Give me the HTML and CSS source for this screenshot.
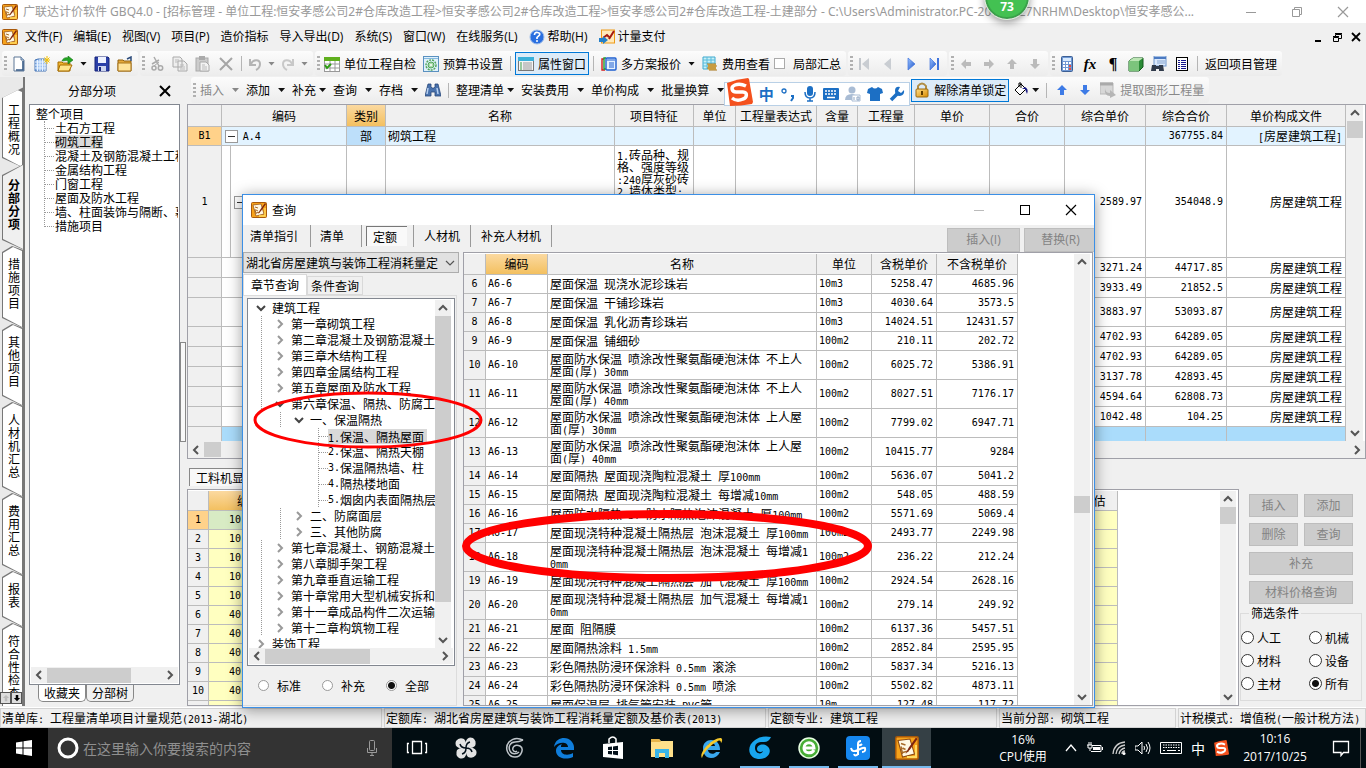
FILE: index.html
```html
<!DOCTYPE html>
<html lang="zh-CN">
<head>
<meta charset="utf-8">
<title>广联达计价软件 GBQ4.0</title>
<link rel="stylesheet" href="styles.css">
</head>
<body>
<svg class="defs" aria-hidden="true">
  <defs>
    <linearGradient id="gBlue" x1="0" y1="0" x2="1" y2="1"><stop offset="0" stop-color="#9cc4ff"/><stop offset="1" stop-color="#1c53c8"/></linearGradient>
    <linearGradient id="gGold" x1="0" y1="0" x2="1" y2="1"><stop offset="0" stop-color="#ffe08a"/><stop offset="1" stop-color="#d98a00"/></linearGradient>
  </defs>
  <symbol id="app" viewBox="0 0 16 16"><rect x=".5" y=".5" width="15" height="15" rx="1" fill="#f6a21b" stroke="#a8590b"/><path d="M2 3l8-1 3 10-8 2z" fill="#fff8e4" stroke="#8e4a10" stroke-width=".7"/><path d="M4 5l3 1M5 8l2 1M5 11l4-1M4 7l1 5" stroke="#a86a28"/><path d="M14 1L9 8l-2 4 3-3 5-7z" fill="#7d2410"/><path d="M14 6v8H8" fill="none" stroke="#ffdc62" stroke-width="1.3"/></symbol>
  <symbol id="new" viewBox="0 0 16 16"><path d="M3 1h7l3 3v11H3z" fill="#fff" stroke="#5c7796"/><path d="M12 5v9H5" fill="none" stroke="#375b86" stroke-width="1.6"/><path d="M10 1v3h3" fill="#b9d2ee" stroke="#5c7796"/></symbol>
  <symbol id="proj" viewBox="0 0 16 16"><path d="M1 4l3-1h8v12H1z" fill="#9abff0" stroke="#4674b4"/><path d="M3.500 4v11M6 3v12M8.500 3v12M11 3v12M1 6h11M1 9h11M1 12h11" stroke="#e8f3ff"/><path d="M13 0v8M9.500 4h6.500M10.500 1.500l5 5M15.500 1.500l-5 5" stroke="#f3c000"/></symbol>
  <symbol id="open" viewBox="0 0 16 16"><path d="M1 6h4l1 1h7v8H1z" fill="#f1b42f" stroke="#a66c00"/><path d="M3 9h12l-3 6H1z" fill="#ffe48a" stroke="#a66c00"/><path d="M5 5c1-3 4-4 6-3V0l5 4-5 4V5C9 4 7 5 5 5z" fill="#24a624" stroke="#107410" stroke-width=".6"/></symbol>
  <symbol id="save" viewBox="0 0 16 16"><path d="M1 1h13l1 1v13H1z" fill="#2a3fa8" stroke="#17257a"/><rect x="4" y="1" width="8" height="6" fill="#eef2ff"/><rect x="4" y="10" width="8" height="5" fill="#cdd5ef"/><rect x="5" y="11" width="2" height="4" fill="#17257a"/></symbol>
  <symbol id="folder" viewBox="0 0 16 16"><path d="M1 4h5l1 1h7v10H1z" fill="#e6a93a" stroke="#8f6010"/><path d="M1 7h13v8H1z" fill="#ffe39a" stroke="#a8741a"/><path d="M10 3l4-2v4" fill="none" stroke="#2d4c7b" stroke-width="1.500"/></symbol>
  <symbol id="cut" viewBox="0 0 16 16"><path d="M5 1l5 9M10 4l-7 4" stroke="#aaa" stroke-width="1.500"/><circle cx="11.500" cy="12" r="2.200" fill="none" stroke="#aaa" stroke-width="1.500"/><circle cx="5" cy="12" r="2" fill="none" stroke="#aaa" stroke-width="1.500"/><path d="M5 10l5-4" stroke="#aaa"/></symbol>
  <symbol id="copy" viewBox="0 0 16 16"><path d="M1 1h7l2 2v8H1zM6 5h6l3 3v7H6z" fill="#eee" stroke="#aaa"/><path d="M3 4h4M3 6h3M8 9h4M8 11h5M8 13h5" stroke="#bbb"/></symbol>
  <symbol id="paste" viewBox="0 0 16 16"><rect x="1" y="2" width="12" height="13" fill="#ccc" stroke="#aaa"/><rect x="4" y="0" width="6" height="4" fill="#aaa"/><path d="M5 6h6l3 3v6H5z" fill="#f3f3f3" stroke="#aaa"/><path d="M7 9h3M7 11h5M7 13h5" stroke="#bbb"/></symbol>
  <symbol id="del" viewBox="0 0 16 16"><path d="M2 2l12 12M14 2L2 14" stroke="#a6a6a6" stroke-width="2"/></symbol>
  <symbol id="undo" viewBox="0 0 12 16"><path d="M1 3v6h6M2 8c2-5 9-5 9 0 0 3-2 5-4 6" fill="none" stroke="#b4b4b4" stroke-width="2"/></symbol>
  <symbol id="redo" viewBox="0 0 12 16"><path d="M11 3v6H5M10 8C8 3 1 3 1 8c0 3 2 5 4 6" fill="none" stroke="#c8c8c8" stroke-width="2"/></symbol>
  <symbol id="check" viewBox="0 0 16 16"><rect x=".5" y="1.500" width="15" height="14" fill="#fff" stroke="#999"/><rect y="1" width="16" height="4" fill="#60b01e"/><path d="M6 5v10M11 5v10M1 8h15M1 12h15" stroke="#999"/><path d="M1 9l2 3 4-4" fill="none" stroke="#2c9c12" stroke-width="2"/></symbol>
  <symbol id="budget" viewBox="0 0 16 16"><rect x=".5" y=".5" width="15" height="15" fill="#dff1fc" stroke="#5a91c0"/><path d="M1 2.500h14" stroke="#85b8df"/><circle cx="8" cy="9" r="5" fill="none" stroke="#53a65c" stroke-width="1.500" stroke-dasharray="2 1"/><circle cx="8" cy="9" r="3" fill="#a9dcab" stroke="#53a65c"/><circle cx="8" cy="9" r="1" fill="#fff"/></symbol>
  <symbol id="prop" viewBox="0 0 16 16"><rect x=".5" y="1.500" width="15" height="13" fill="#f5f5f5" stroke="#777"/><path d="M0 1h16v4H0z" fill="#3bb0d9"/><path d="M2 7h2M2 9h2M2 11h2M2 13h2" stroke="#3c9b48"/><path d="M5 7h9M5 9h9M5 11h9M5 13h9" stroke="#999"/></symbol>
  <symbol id="multi" viewBox="0 0 16 16"><path d="M3 3H1v11h3" fill="none" stroke="#d51e1e" stroke-width="1.400"/><path d="M5 2H3v11h3" fill="none" stroke="#219d2f" stroke-width="1.400"/><rect x="5" y="2" width="10" height="12" rx="1" fill="#e4f1ff" stroke="#1e5fd0" stroke-width="1.400"/><path d="M6 4h8M8 7h5M8 9h5M8 11h5" stroke="#1e5fd0"/></symbol>
  <symbol id="fee" viewBox="0 0 16 16"><path d="M1 1h12v12H1z" fill="#c8f0f7" stroke="#3ca8cf"/><path d="M1 4h12M1 7h12M1 10h12M5 1v12M9 1v12" stroke="#58bcdc"/><path d="M6 8h8v6H6z" fill="#e9c46a"/><path d="M5 8h9M6 10h9M5 12h9M7 14h8" stroke="#a77416"/></symbol>
  <symbol id="first" viewBox="0 0 16 16"><path d="M3 2v12" stroke="#c3c7cc" stroke-width="2"/><path d="M12 2v12L5 8z" fill="#c9cdd2"/></symbol>
  <symbol id="prev" viewBox="0 0 16 16"><path d="M11 2v12L4 8z" fill="#c9cdd2"/></symbol>
  <symbol id="next" viewBox="0 0 16 16"><path d="M5 2v12l7-6z" fill="url(#gBlue)" stroke="#3f74dc" stroke-width=".7"/></symbol>
  <symbol id="last" viewBox="0 0 16 16"><path d="M4 2v12l6-6z" fill="url(#gBlue)" stroke="#3f74dc" stroke-width=".7"/><path d="M12 2v12" stroke="#3f74dc" stroke-width="2"/></symbol>
  <symbol id="arr" viewBox="0 0 16 16"><path d="M8 3l5 5h-3v5H6V8H3z" fill="currentColor"/></symbol>
  <symbol id="calc" viewBox="0 0 16 16"><rect x="2.500" y=".5" width="11" height="15" rx="1" fill="#6f98d4" stroke="#3c5f94"/><rect x="4" y="2" width="8" height="3" fill="#d7eaff"/><path d="M4 7h2M7 7h2M10 7h2M4 10h2M7 10h2M4 13h2M7 13h2" stroke="#fff" stroke-width="2"/><path d="M10 10h2M10 13h2" stroke="#e54b40" stroke-width="2"/></symbol>
  <symbol id="cube" viewBox="0 0 16 16"><path d="M1 5l4-3h10v9l-4 4H1z" fill="#2c8c37" stroke="#155d1d"/><path d="M1 5h10v10H1z" fill="#7cc47c"/><path d="M1 5l4-3h10l-4 3z" fill="#bce6b5"/></symbol>
  <symbol id="find" viewBox="0 0 16 16"><rect x="3" y="0" width="12" height="10" fill="#dbe9fb" stroke="#6e95cc"/><path d="M3 2h12" stroke="#4b7ac2" stroke-width="2"/><path d="M6 5h8M6 7h8" stroke="#88a5cf"/><path d="M1 9h4v6H0zM8 9h4l1 6H8zM4 10h5v3H4z" fill="#303a4a"/></symbol>
  <symbol id="list" viewBox="0 0 16 16"><rect x="2.500" y="1.500" width="11" height="13" fill="#fff" stroke="#000"/><path d="M4 4.500h2M4 6.500h2M4 8.500h2M4 10.500h2M4 12.500h2M7 4.500h5M7 6.500h5M7 8.500h5M7 10.500h5M7 12.500h5" stroke="#17178e"/></symbol>
  <symbol id="bino" viewBox="0 0 16 16"><path d="M3 2h3v3l1 1h2l1-1V2h3l1 4 2 8h-6v-4H6v4H0l2-8z" fill="#4972ad" stroke="#284878" stroke-width=".8"/><path d="M3 6l-1 6M12 6l1 6" stroke="#b6d0f2" stroke-width="1.500"/></symbol>
  <symbol id="lock" viewBox="0 0 16 16"><path d="M4 8V4q4-5 8 0v4" fill="none" stroke="#b08e46" stroke-width="2"/><rect x="2" y="7" width="12" height="8" rx="1" fill="url(#gGold)" stroke="#9b6b10"/><path d="M8 9v4" stroke="#5c3b00" stroke-width="2"/></symbol>
  <symbol id="bucket" viewBox="0 0 16 16"><path d="M2 8l6-6 5 5-6 6z" fill="#fff" stroke="#000"/><path d="M6 5V1h2v5" fill="none" stroke="#000"/><path d="M12 5q4 2 2 7l-2-5-3 0z" fill="#171783"/></symbol>
  <symbol id="extract" viewBox="0 0 16 16"><path d="M0 1h13v11H0z" fill="#d7d7d7" stroke="#b7b7b7"/><path d="M0 2h13" stroke="#aaa" stroke-width="3"/><path d="M5 6q0 5 5 5V8l6 5-6 3v-2q-6 0-5-8" fill="#b5b5b5"/></symbol>
  <symbol id="help" viewBox="0 0 16 16"><circle cx="8" cy="8" r="7" fill="#2a6fe0" stroke="#9ebdea"/><path d="M5.500 6q0-3 3-2.500 3 .5 2 2.500L8 8.500V10" fill="none" stroke="#fff" stroke-width="1.700"/><circle cx="8" cy="12" r="1" fill="#fff"/></symbol>
  <symbol id="pay" viewBox="0 0 16 16"><rect x="2.500" y="1" width="13" height="13" fill="#ffe9ba" stroke="#ee9a16"/><path d="M4 9l4-3 2 2M15 2l-5 8" fill="none" stroke="#a61a10" stroke-width="2"/><path d="M0 9h4V7l5 4-5 4v-2H0z" fill="#2580c8"/></symbol>
  <symbol id="chev" viewBox="0 0 16 16"><path d="M4 10l4-4 4 4" fill="none" stroke="currentColor" stroke-width="2"/></symbol>
  <symbol id="chevthin" viewBox="0 0 16 16"><path d="M4 10l4-4 4 4" fill="none" stroke="currentColor" stroke-width="1.200"/></symbol>
  <symbol id="cross" viewBox="0 0 16 16"><path d="M3 3l10 10M13 3L3 13" stroke="currentColor" stroke-width="1.200"/></symbol>
  <symbol id="sogou" viewBox="0 0 28 28"><path d="M2 5q10-4 21-5l1 1 4 23-1 2Q16 28 5 28z" fill="#f4511e"/><path d="M21 8q-6-3-11-1c-5 2-3 7 1 7h7c5 0 4 6 0 7q-6 3-11-1" fill="none" stroke="#fff" stroke-width="3.500"/></symbol>
</svg>

<header class="titlebar">
  <svg class="ic"><use href="#app"/></svg>
  <h1>广联达计价软件 GBQ4.0 - [招标管理 - 单位工程:恒安孝感公司2#仓库改造工程&gt;恒安孝感公司2#仓库改造工程&gt;恒安孝感公司2#仓库改造工程-土建部分 - C:\Users\Administrator.PC-20141127NRHM\Desktop\恒安孝感公...</h1>
  <div class="winbtns">
    <button aria-label="最小化"><svg class="ic" viewBox="0 0 16 16"><path d="M3 8.500h10" stroke="currentColor"/></svg></button>
    <button aria-label="还原"><svg class="ic" viewBox="0 0 16 16"><path d="M3.500 5.500h7v7h-7zM5.500 5.500v-2h7v7h-2" fill="none" stroke="currentColor"/></svg></button>
    <button aria-label="关闭"><svg class="ic"><use href="#cross"/></svg></button>
  </div>
  <div class="ball">73</div>
</header>

<nav class="menubar">
  <svg class="ic"><use href="#app"/></svg>
  <button>文件(F)</button><button>编辑(E)</button><button>视图(V)</button><button>项目(P)</button><button>造价指标</button><button>导入导出(D)</button><button>系统(S)</button><button>窗口(W)</button><button>在线服务(L)</button>
  <button><svg class="ic"><use href="#help"/></svg>帮助(H)</button>
  <button><svg class="ic"><use href="#pay"/></svg>计量支付</button>
  <div class="mdi">
    <button aria-label="最小化子窗口"><svg class="ic s12" viewBox="0 0 12 12"><path d="M3 10h6" stroke="#000" stroke-width="2"/></svg></button>
    <button aria-label="还原子窗口"><svg class="ic s12" viewBox="0 0 12 12"><path d="M2.500 6.500h5v4h-5zM2 5.500h6M4.500 5V3.500h6v4H8M4 2.500h7" fill="none" stroke="#000"/></svg></button>
    <button aria-label="关闭子窗口"><svg class="ic s12" viewBox="0 0 12 12"><path d="M2 2l8 8M10 2l-8 8" stroke="#000" stroke-width="1.800"/></svg></button>
  </div>
</nav>

<div class="bars">
  <div class="band g7"><i class="grip"></i><button aria-label="新建"><svg class="ic"><use href="#new"/></svg></button><button aria-label="新建项目"><svg class="ic"><use href="#proj"/></svg></button><button aria-label="打开"><svg class="ic"><use href="#open"/></svg></button><i class="caret"></i><button aria-label="保存"><svg class="ic"><use href="#save"/></svg></button><button aria-label="文件夹"><svg class="ic"><use href="#folder"/></svg></button></div>
  <div class="band g7"><i class="grip"></i><button aria-label="剪切"><svg class="ic"><use href="#cut"/></svg></button><button aria-label="复制"><svg class="ic"><use href="#copy"/></svg></button><button aria-label="粘贴"><svg class="ic"><use href="#paste"/></svg></button><button aria-label="删除"><svg class="ic"><use href="#del"/></svg></button><i class="sep"></i><button aria-label="撤销"><svg class="ic w12"><use href="#undo"/></svg></button><i class="caret dim"></i><button aria-label="重做"><svg class="ic w12"><use href="#redo"/></svg></button><i class="caret dim"></i></div>
  <div class="band g7"><i class="grip"></i><button class="tb"><svg class="ic"><use href="#check"/></svg>单位工程自检</button><button class="tb"><svg class="ic"><use href="#budget"/></svg>预算书设置</button><i class="sep"></i><button class="tb on"><svg class="ic"><use href="#prop"/></svg>属性窗口</button><i class="sep"></i><button class="tb"><svg class="ic"><use href="#multi"/></svg>多方案报价</button><i class="caret"></i><button class="tb"><svg class="ic"><use href="#fee"/></svg>费用查看</button><label class="chk"><input type="checkbox">局部汇总</label></div>
  <div class="band g7"><i class="grip"></i><button aria-label="首条"><svg class="ic"><use href="#first"/></svg></button><button aria-label="上一条"><svg class="ic"><use href="#prev"/></svg></button><button aria-label="下一条"><svg class="ic"><use href="#next"/></svg></button><button aria-label="末条"><svg class="ic"><use href="#last"/></svg></button></div>
  <div class="band g7"><i class="grip"></i><button aria-label="左移"><svg class="ic gray left"><use href="#arr"/></svg></button><button aria-label="右移"><svg class="ic gray right"><use href="#arr"/></svg></button><button aria-label="上移"><svg class="ic gray"><use href="#arr"/></svg></button><button aria-label="下移"><svg class="ic gray down"><use href="#arr"/></svg></button></div>
  <div class="band g7"><i class="grip"></i><button aria-label="计算器"><svg class="ic"><use href="#calc"/></svg></button><button class="fx">fx</button><button class="para">¶</button><button aria-label="立方体"><svg class="ic"><use href="#cube"/></svg></button><button aria-label="查找"><svg class="ic"><use href="#find"/></svg></button><button aria-label="清单"><svg class="ic"><use href="#list"/></svg></button><i class="sep"></i><button>返回项目管理</button></div>
</div>

<main class="work">
  <nav class="vtabs">
    <button class="vt first"><span>工程概况</span></button>
    <button class="vt cur"><span>分部分项</span></button>
    <button class="vt"><span>措施项目</span></button>
    <button class="vt"><span>其他项目</span></button>
    <button class="vt"><span>人材机汇总</span></button>
    <button class="vt"><span>费用汇总</span></button>
    <button class="vt"><span>报表</span></button>
    <button class="vt end"><span>符合性检查</span></button>
    <div class="vnav"><button aria-label="向上"><svg class="ic s10 gray"><use href="#arr"/></svg></button><button aria-label="向下"><svg class="ic s10 down"><use href="#arr"/></svg></button></div>
  </nav>

  <aside class="side">
    <div class="sidehead"><h2>分部分项</h2><button aria-label="关闭面板"><svg class="ic" viewBox="0 0 16 16"><path d="M3 3l10 10M13 3L3 13" stroke="#000" stroke-width="2"/></svg></button></div>
    <div class="sidebox">
      <div class="ptree">
        <div>整个项目</div>
        <ul><li>土石方工程</li><li><mark>砌筑工程</mark></li><li>混凝土及钢筋混凝土工程</li><li>金属结构工程</li><li>门窗工程</li><li>屋面及防水工程</li><li>墙、柱面装饰与隔断、幕</li><li>措施项目</li></ul>
      </div>
      <div class="hs"><svg class="ic left"><use href="#chev"/></svg><div class="track"><i class="w84"></i></div><svg class="ic right"><use href="#chev"/></svg></div>
    </div>
    <div class="foottabs"><button>收藏夹</button><button>分部树</button></div>
  </aside>
  <div class="split"><i></i></div>

  <section class="right">
    <div class="bars">
      <div class="band g7"><i class="grip"></i>
        <button class="dd off">插入<i class="caret dim"></i></button><button class="dd">添加<i class="caret"></i></button><button class="dd tight">补充<i class="caret"></i></button><button class="dd">查询<i class="caret"></i></button><button class="dd">存档<i class="caret"></i></button><button aria-label="查找"><svg class="ic"><use href="#bino"/></svg></button><i class="sep"></i><button class="dd tight">整理清单<i class="caret"></i></button><button class="dd">安装费用<i class="caret"></i></button><button class="dd">单价构成<i class="caret"></i></button><button class="dd">批量换算<i class="caret"></i></button>
        <span class="imegap"></span>
        <button class="tb on"><svg class="ic"><use href="#lock"/></svg>解除清单锁定</button><button class="dd tight"><svg class="ic"><use href="#bucket"/></svg><i class="caret"></i></button><i class="sep"></i><button aria-label="上移"><svg class="ic blue"><use href="#arr"/></svg></button><button aria-label="下移"><svg class="ic blue down"><use href="#arr"/></svg></button><button class="tb off"><svg class="ic"><use href="#extract"/></svg>提取图形工程量</button>
      </div>
    </div>

    <div class="gridbox upper">
      <div class="view">
        <table class="grid">
          <colgroup><col class="c34"><col class="c125"><col class="c39"><col><col class="c79"><col class="c42"><col class="c81"><col class="c41"><col class="c57"><col class="c75"><col class="c75"><col class="c81"><col class="c81"><col class="c119"></colgroup>
          <thead><tr class="h22"><th></th><th>编码</th><th class="hot">类别</th><th>名称</th><th>项目特征</th><th>单位</th><th>工程量表达式</th><th>含量</th><th>工程量</th><th>单价</th><th>合价</th><th>综合单价</th><th>综合合价</th><th>单价构成文件</th></tr></thead>
          <tbody>
            <tr class="h19 light"><th class="rowhot m">B1</th><td><span class="pm"></span> <span class="m">A.4</span></td><td class="mid sel">部</td><td>砌筑工程</td><td></td><td></td><td></td><td></td><td></td><td></td><td></td><td></td><td class="n">367755.84</td><td class="r"><span class="m">[</span>房屋建筑工程<span class="m">]</span></td></tr>
            <tr class="h112"><th class="m">1</th><td class="nest"><span class="pm"></span></td><td></td><td></td><td class="feat"><span class="m">1.</span>砖品种、规<br>格、强度等级<br><span class="m">:240</span>厚灰砂砖<br><span class="m">2.</span>墙体类型<span class="m">:</span></td><td></td><td></td><td></td><td></td><td></td><td></td><td class="n">2589.97</td><td class="n">354048.9</td><td class="r">房屋建筑工程</td></tr>
            <tr class="h20"><th></th><td></td><td></td><td></td><td></td><td></td><td></td><td></td><td></td><td></td><td></td><td class="n">3271.24</td><td class="n">44717.85</td><td class="r">房屋建筑工程</td></tr>
            <tr class="h20"><th></th><td></td><td></td><td></td><td></td><td></td><td></td><td></td><td></td><td></td><td></td><td class="n">3933.49</td><td class="n">21852.5</td><td class="r">房屋建筑工程</td></tr>
            <tr class="h29"><th></th><td></td><td></td><td></td><td></td><td></td><td></td><td></td><td></td><td></td><td></td><td class="n">3883.97</td><td class="n">53093.87</td><td class="r">房屋建筑工程</td></tr>
            <tr class="h20"><th></th><td></td><td></td><td></td><td></td><td></td><td></td><td></td><td></td><td></td><td></td><td class="n">4702.93</td><td class="n">64289.05</td><td class="r">房屋建筑工程</td></tr>
            <tr class="h20"><th></th><td></td><td></td><td></td><td></td><td></td><td></td><td></td><td></td><td></td><td></td><td class="n">4702.93</td><td class="n">64289.05</td><td class="r">房屋建筑工程</td></tr>
            <tr class="h20"><th></th><td></td><td></td><td></td><td></td><td></td><td></td><td></td><td></td><td></td><td></td><td class="n">3137.78</td><td class="n">42893.45</td><td class="r">房屋建筑工程</td></tr>
            <tr class="h20"><th></th><td></td><td></td><td></td><td></td><td></td><td></td><td></td><td></td><td></td><td></td><td class="n">4594.64</td><td class="n">62808.73</td><td class="r">房屋建筑工程</td></tr>
            <tr class="h20"><th></th><td></td><td></td><td></td><td></td><td></td><td></td><td></td><td></td><td></td><td></td><td class="n">1042.48</td><td class="n">104.25</td><td class="r">房屋建筑工程</td></tr>
            <tr class="h19 blue"><th></th><td></td><td></td><td></td><td></td><td></td><td></td><td></td><td></td><td></td><td></td><td></td><td></td><td></td></tr>
          </tbody>
        </table>
        <div class="vs"><svg class="ic"><use href="#chev"/></svg><div class="track"><i class="h17"></i></div><svg class="ic down"><use href="#chev"/></svg></div>
      </div>
      <div class="hs"><svg class="ic left"><use href="#chev"/></svg><div class="track"><i class="w17"></i></div><svg class="ic right"><use href="#chev"/></svg></div>
    </div>

    <div class="subtab"><button>工料机显示</button></div>

    <div class="lower">
      <div class="gridbox">
        <div class="view">
          <table class="grid yel">
            <colgroup><col class="c21"><col class="c81"><col><col class="c48"></colgroup>
            <thead><tr class="h20"><th></th><th class="hot">编码</th><th></th><th>暂估</th></tr></thead>
            <tbody>
              <tr class="h19"><th class="rowhot m">1</th><td class="code green">10</td><td></td><td></td></tr>
              <tr class="h19"><th class="m">2</th><td class="code">10</td><td></td><td></td></tr>
              <tr class="h19"><th class="m">3</th><td class="code">10</td><td></td><td></td></tr>
              <tr class="h19"><th class="m">4</th><td class="code">10</td><td></td><td></td></tr>
              <tr class="h19"><th class="m">5</th><td class="code">10</td><td></td><td></td></tr>
              <tr class="h19"><th class="m">6</th><td class="code">40</td><td></td><td></td></tr>
              <tr class="h19"><th class="m">7</th><td class="code">40</td><td></td><td></td></tr>
              <tr class="h19"><th class="m">8</th><td class="code">40</td><td></td><td></td></tr>
              <tr class="h19"><th class="m">9</th><td class="code">40</td><td></td><td></td></tr>
              <tr class="h19"><th class="m">10</th><td class="code">40</td><td></td><td></td></tr>
              <tr class="h19"><th></th><td></td><td></td><td></td></tr>
            </tbody>
          </table>
          <div class="blank"></div>
          <div class="vs"><svg class="ic"><use href="#chev"/></svg><div class="track"><i class="h17"></i></div><svg class="ic down"><use href="#chev"/></svg></div>
        </div>
      </div>
      <div class="ops">
        <div class="opgrid">
          <button class="gb" disabled>插入</button><button class="gb" disabled>添加</button>
          <button class="gb" disabled>删除</button><button class="gb" disabled>查询</button>
          <button class="gb wide" disabled>补充</button>
          <button class="gb wide" disabled>材料价格查询</button>
        </div>
        <fieldset>
          <legend>筛选条件</legend>
          <label><input type="radio" name="flt">人工</label><label><input type="radio" name="flt">机械</label>
          <label><input type="radio" name="flt">材料</label><label><input type="radio" name="flt">设备</label>
          <label><input type="radio" name="flt">主材</label><label><input type="radio" name="flt" checked>所有</label>
        </fieldset>
      </div>
    </div>
  </section>
</main>

<footer class="status">
  <span>清单库<span class="m">: </span>工程量清单项目计量规范<span class="m">(2013-</span>湖北<span class="m">)</span></span>
  <span>定额库<span class="m">: </span>湖北省房屋建筑与装饰工程消耗量定额及基价表<span class="m">(2013)</span></span>
  <span>定额专业<span class="m">: </span>建筑工程</span>
  <span>当前分部<span class="m">: </span>砌筑工程</span>
  <span>计税模式<span class="m">: </span>增值税<span class="m">(</span>一般计税方法<span class="m">)</span></span>
</footer>

<div class="taskbar">
  <button class="start" aria-label="开始"><svg class="ic" viewBox="0 0 16 16"><path d="M0 2.500l6.500-1v6H0zM7.500 1.300L16 0v7.500H7.500zM0 8.500h6.500v6L0 13.500zM7.500 8.500H16V16l-8.500-1.300z" fill="#fff"/></svg></button>
  <label class="search"><svg class="ic s22" viewBox="0 0 22 22"><circle cx="11" cy="11" r="9" fill="none" stroke="#fff" stroke-width="3"/></svg><input type="text" placeholder="在这里输入你要搜索的内容" aria-label="搜索"><svg class="ic" viewBox="0 0 16 16"><rect x="5.500" y=".5" width="5" height="10" rx="1" fill="none" stroke="#9a9a9a"/><path d="M3.500 8v4.500h9V8M8 12v4M6 15.500h4" fill="none" stroke="#9a9a9a"/></svg></label>
  <div class="apps">
    <button aria-label="任务视图"><svg class="ic s24" viewBox="0 0 24 24"><path d="M7.500 5.500h9v12h-9zM4 7.500H2.500v9H4M20 7.500h1.500v9H20" fill="none" stroke="#fff" stroke-width="1.300"/></svg></button>
    <button aria-label="旋风"><svg class="ic s24" viewBox="0 0 24 24"><g fill="#e3e3e3"><path d="M12 12H5Q0 10 2 5q3-4 8-2 3 3 2 9z"/><path d="M12 12V5q2-5 7-3 4 3 2 8-3 3-9 2z"/><path d="M12 12h7q5 2 3 7-3 4-8 2-3-3-2-9z"/><path d="M12 12v7q-2 5-7 3-4-3-2-8 3-3 9-2z"/></g><path d="M12 12Q7 12 6 8M12 12q0-5 4-6M12 12q5 0 6 4M12 12q0 5-4 6" stroke="#03101a" stroke-width="1.500" fill="none"/></svg></button>
    <button aria-label="浏览器"><svg class="ic s24" viewBox="0 0 24 24"><path d="M20 4Q12 0 6 6c-5 6-1 15 6 15 7 0 9-9 5-11-5-2-8 1-7 4 1 2 3 2 4 1M20 4q-4 2-8 2c-5 0-7 5-5 9 2 4 7 3 9 1" fill="none" stroke="#bfc5ca" stroke-width="1.500"/></svg></button>
    <button aria-label="Edge"><svg class="ic s24" viewBox="0 0 24 24"><path d="M2 11C3 4 8 2 12 2c6 0 10 5 10 9v3H9c0 5 7 6 12 3v4C12 25 4 21 4 15c0-4 3-6 6-7-1 1-1 2-1 3h7c0-5-9-6-14 0z" fill="#0f7ddb"/></svg></button>
    <button aria-label="应用商店"><svg class="ic s24" viewBox="0 0 24 24"><path d="M2 8l20-2v17L2 21z" fill="#fff"/><path d="M8 7V3q4-4 7 0v4" fill="none" stroke="#fff" stroke-width="1.500"/><path d="M7 11l4-.5V14H7zM12 10.400l5-.6V14h-5zM7 15h4v3.500L7 18zM12 15h5v4.300l-5-.7z" fill="#03101a"/></svg></button>
    <button aria-label="资源管理器"><svg class="ic s24" viewBox="0 0 24 24"><path d="M1 3h8l2 2h12v16H1z" fill="#ffe08a"/><path d="M1 3h8l2 3H1z" fill="#e8b54a"/><path d="M5 22v-9h14v9h-4v-5H9v5z" fill="#39b4e8"/></svg></button>
    <button aria-label="IE"><svg class="ic s24" viewBox="0 0 24 24"><path d="M4 12c0-5 4-8 8-8 6 0 9 4 9 10H9c0 4 6 5 8 2h4c-2 4-5 6-9 6-5 0-8-4-8-10zm5-2h7c0-4-7-4-7 0z" fill="#3aa8ee"/><path d="M3 22C-1 17 14 1 22 2c2 1 1 4 0 5 0-2-1-3-3-2C12 8 4 17 3 22z" fill="#f6c92d"/></svg></button>
    <button class="run" aria-label="云浏览器"><svg class="ic s24" viewBox="0 0 24 24"><path d="M23 1Q14-1 7 4C-2 10 0 22 10 23c11 1 15-9 9-13-4-3-10-1-10 3 0 3 4 4 6 2-1 4-8 3-8-3C7 6 12 6 16 6q5 0 7-5z" fill="#18a5ee"/></svg></button>
    <button class="run" aria-label="360浏览器"><svg class="ic s24" viewBox="0 0 24 24"><circle cx="12" cy="12" r="10" fill="#47ad35" stroke="#e9ffe4" stroke-width="1.500"/><path d="M7 12h10c0-7-10-7-10 0 0 6 8 6 10 2" fill="none" stroke="#fff" stroke-width="3"/></svg></button>
    <button class="run" aria-label="助手"><svg class="ic s24" viewBox="0 0 24 24"><rect width="24" height="24" rx="4" fill="#1687ef"/><path d="M12 19V8q0-3 3-3M12 9q2 1 4-1M5 12q1 5 7 2t7-2q1 4-3 4M12 18q-3 3-4 0" fill="none" stroke="#fff" stroke-width="2"/></svg></button>
    <button class="run act" aria-label="计价软件"><svg class="ic s24"><use href="#app"/></svg></button>
  </div>
  <div class="cpu">16%<br>CPU使用</div>
  <div class="tray">
    <svg class="ic" viewBox="0 0 16 16"><path d="M3 11l5-6 5 6" fill="none" stroke="#fff" stroke-width="1.300"/></svg>
    <svg class="ic" viewBox="0 0 16 16"><path d="M5 5.500h9v6H4M15.500 7v3M0 5h5M2 2v3M4 2v3M1 5v3h4V5M3 8v3" fill="none" stroke="#fff"/><path d="M6 7h7v3H6z" fill="#fff"/></svg>
    <svg class="ic" viewBox="0 0 16 16"><path d="M2 14Q3 3 14 2M5 14q1-8 9-9M8 14q1-5 6-6M11 14q0-3 3-3" fill="none" stroke="#ccc" stroke-width="1.300"/><circle cx="13" cy="13.500" r="1.500" fill="#fff"/></svg>
    <svg class="ic" viewBox="0 0 16 16"><path d="M0 6h3l4-4v12l-4-4H0zM9 6q1 2 0 4M11 4q3 4 0 8M13 2q4 6 0 12" fill="none" stroke="#fff"/></svg>
    <svg class="ic w24" viewBox="0 0 24 16"><path d="M1.500 2.500h21v11h-21z" fill="none" stroke="#fff"/><path d="M4 5h17M4 7.500h17" stroke="#fff" stroke-dasharray="1.500 1"/><path d="M4 10.500h2M8 10.500h9M19 10.500h2" stroke="#fff"/></svg>
    <span class="zh">中</span>
    <svg class="ic"><use href="#sogou"/></svg>
  </div>
  <div class="clock">10:16<br>2017/10/25</div>
  <button class="note" aria-label="通知"><svg class="ic s18" viewBox="0 0 18 18"><path d="M1.500 2.500h15v11h-5L9 16.500v-3H1.500z" fill="none" stroke="#fff" stroke-width="1.300"/></svg></button>
</div>

<div class="ime">
  <svg class="logo"><use href="#sogou"/></svg>
  <b>中</b>
  <svg class="ic" viewBox="0 0 16 16"><circle cx="4" cy="5" r="2" fill="none" stroke="#1c6fc4" stroke-width="1.300"/><path d="M11 10h2v2l-2 3" fill="none" stroke="#1c6fc4" stroke-width="2"/></svg>
  <svg class="ic" viewBox="0 0 16 16"><rect x="5" y="0" width="6" height="10" rx="3" fill="#1c6fc4"/><path d="M3 6q0 6 5 6t5-6M8 12v3M5 15h6" fill="none" stroke="#1c6fc4" stroke-width="1.500"/></svg>
  <svg class="ic" viewBox="0 0 16 16"><rect y="2" width="16" height="12" rx="1" fill="#1c6fc4"/><path d="M2 5h12M2 8h12" stroke="#fff" stroke-width="1.500" stroke-dasharray="2 1"/><path d="M4 11.500h8" stroke="#fff" stroke-width="1.500"/></svg>
  <svg class="ic" viewBox="0 0 16 16"><circle cx="7" cy="4" r="3.500" fill="#a9bcd4"/><path d="M0 14q0-6 7-6 5 0 5 6z" fill="#a9bcd4"/><path d="M7 9h8v6H7z" fill="#fff" stroke="#a9bcd4"/><path d="M9 11v3M12 11v3h2v-3z" fill="none" stroke="#8fa6c4"/></svg>
  <svg class="ic" viewBox="0 0 16 16"><path d="M1 3l4-2q3 3 6 0l4 2 1 4-3 1v7H3V8L0 7z" fill="#1c6fc4"/></svg>
  <svg class="ic" viewBox="0 0 16 16"><path d="M2 14l7-7" stroke="#1c6fc4" stroke-width="3.500"/><path d="M15 4l-3 3-3-2 2-4q-5-1-5 4t5 5q5-1 4-6z" fill="#1c6fc4"/></svg>
</div>

<section class="dialog" role="dialog" aria-label="查询">
  <header><svg class="ic"><use href="#app"/></svg><h2>查询</h2>
    <div class="winbtns"><button aria-label="最小化"><svg class="ic lt" viewBox="0 0 16 16"><path d="M3 8.500h10" stroke="currentColor"/></svg></button><button aria-label="最大化"><svg class="ic" viewBox="0 0 16 16"><rect x="3.500" y="3.500" width="9" height="9" fill="none" stroke="currentColor"/></svg></button><button aria-label="关闭"><svg class="ic"><use href="#cross"/></svg></button></div>
  </header>
  <div class="dtools">
    <button>清单指引</button><button>清单</button><button class="press">定额</button><button>人材机</button><button>补充人材机</button>
    <div class="dacts"><button class="gb" disabled>插入(I)</button><button class="gb" disabled>替换(R)</button></div>
  </div>
  <div class="dbody">
    <div class="dleft">
      <div class="combo"><select aria-label="定额库"><option>湖北省房屋建筑与装饰工程消耗量定</option></select><svg class="ic down"><use href="#chevthin"/></svg></div>
      <div class="dtabs"><button class="cur">章节查询</button><button>条件查询</button></div>
      <div class="dpage">
        <div class="treebox">
          <div class="view">
            <ul class="tree">
              <li class="l0"><svg class="ic down"><use href="#chev"/></svg>建筑工程</li>
              <li class="l1"><svg class="ic right"><use href="#chev"/></svg>第一章砌筑工程</li>
              <li class="l1"><svg class="ic right"><use href="#chev"/></svg>第二章混凝土及钢筋混凝土</li>
              <li class="l1"><svg class="ic right"><use href="#chev"/></svg>第三章木结构工程</li>
              <li class="l1"><svg class="ic right"><use href="#chev"/></svg>第四章金属结构工程</li>
              <li class="l1"><svg class="ic right"><use href="#chev"/></svg>第五章屋面及防水工程</li>
              <li class="l1"><svg class="ic down"><use href="#chev"/></svg>第六章保温、隔热、防腐工</li>
              <li class="l2"><svg class="ic down"><use href="#chev"/></svg>一、保温隔热</li>
              <li class="l3"><mark><span class="m">1.</span>保温、隔热屋面</mark></li>
              <li class="l3"><span class="m">2.</span>保温、隔热天棚</li>
              <li class="l3"><span class="m">3.</span>保温隔热墙、柱</li>
              <li class="l3"><span class="m">4.</span>隔热楼地面</li>
              <li class="l3"><span class="m">5.</span>烟囱内表面隔热层</li>
              <li class="l2"><svg class="ic right"><use href="#chev"/></svg>二、防腐面层</li>
              <li class="l2"><svg class="ic right"><use href="#chev"/></svg>三、其他防腐</li>
              <li class="l1"><svg class="ic right"><use href="#chev"/></svg>第七章混凝土、钢筋混凝土</li>
              <li class="l1"><svg class="ic right"><use href="#chev"/></svg>第八章脚手架工程</li>
              <li class="l1"><svg class="ic right"><use href="#chev"/></svg>第九章垂直运输工程</li>
              <li class="l1"><svg class="ic right"><use href="#chev"/></svg>第十章常用大型机械安拆和</li>
              <li class="l1"><svg class="ic right"><use href="#chev"/></svg>第十一章成品构件二次运输</li>
              <li class="l1"><svg class="ic right"><use href="#chev"/></svg>第十二章构筑物工程</li>
              <li class="l0"><svg class="ic right"><use href="#chev"/></svg>装饰工程</li>
            </ul>
            <div class="vs"><svg class="ic"><use href="#chev"/></svg><div class="track"><i class="h286"></i></div><svg class="ic down"><use href="#chev"/></svg></div>
          </div>
          <div class="hs"><svg class="ic left"><use href="#chev"/></svg><div class="track"><i class="w105"></i></div><svg class="ic right"><use href="#chev"/></svg></div>
        </div>
        <div class="scope"><label><input type="radio" name="scope">标准</label><label><input type="radio" name="scope">补充</label><label><input type="radio" name="scope" checked>全部</label></div>
      </div>
    </div>
    <div class="gridbox">
      <div class="view">
        <table class="grid quota">
          <colgroup><col class="c22"><col class="c62"><col><col class="c55"><col class="c65"><col class="c81"></colgroup>
          <thead><tr class="h21"><th></th><th class="hot">编码</th><th>名称</th><th>单位</th><th>含税单价</th><th>不含税单价</th></tr></thead>
          <tbody>
            <tr class="h19"><th class="m">6</th><td class="m">A6-6</td><td>屋面保温<span class="m"> </span>现浇水泥珍珠岩</td><td class="m">10m3</td><td class="n">5258.47</td><td class="n">4685.96</td></tr>
            <tr class="h19"><th class="m">7</th><td class="m">A6-7</td><td>屋面保温<span class="m"> </span>干铺珍珠岩</td><td class="m">10m3</td><td class="n">4030.64</td><td class="n">3573.5</td></tr>
            <tr class="h19"><th class="m">8</th><td class="m">A6-8</td><td>屋面保温<span class="m"> </span>乳化沥青珍珠岩</td><td class="m">10m3</td><td class="n">14024.51</td><td class="n">12431.57</td></tr>
            <tr class="h19"><th class="m">9</th><td class="m">A6-9</td><td>屋面保温<span class="m"> </span>铺细砂</td><td class="m">100m2</td><td class="n">210.11</td><td class="n">202.72</td></tr>
            <tr class="h29"><th class="m">10</th><td class="m">A6-10</td><td>屋面防水保温<span class="m"> </span>喷涂改性聚氨酯硬泡沫体<span class="m"> </span>不上人<br>屋面<span class="m">(</span>厚<span class="m">) 30mm</span></td><td class="m">100m2</td><td class="n">6025.72</td><td class="n">5386.91</td></tr>
            <tr class="h29"><th class="m">11</th><td class="m">A6-11</td><td>屋面防水保温<span class="m"> </span>喷涂改性聚氨酯硬泡沫体<span class="m"> </span>不上人<br>屋面<span class="m">(</span>厚<span class="m">) 40mm</span></td><td class="m">100m2</td><td class="n">8027.51</td><td class="n">7176.17</td></tr>
            <tr class="h29"><th class="m">12</th><td class="m">A6-12</td><td>屋面防水保温<span class="m"> </span>喷涂改性聚氨酯硬泡沫体<span class="m"> </span>上人屋<br>面<span class="m">(</span>厚<span class="m">) 30mm</span></td><td class="m">100m2</td><td class="n">7799.02</td><td class="n">6947.71</td></tr>
            <tr class="h29"><th class="m">13</th><td class="m">A6-13</td><td>屋面防水保温<span class="m"> </span>喷涂改性聚氨酯硬泡沫体<span class="m"> </span>上人屋<br>面<span class="m">(</span>厚<span class="m">) 40mm</span></td><td class="m">100m2</td><td class="n">10415.77</td><td class="n">9284</td></tr>
            <tr class="h19"><th class="m">14</th><td class="m">A6-14</td><td>屋面隔热<span class="m"> </span>屋面现浇陶粒混凝土<span class="m"> </span>厚<span class="m">100mm</span></td><td class="m">100m2</td><td class="n">5636.07</td><td class="n">5041.2</td></tr>
            <tr class="h19"><th class="m">15</th><td class="m">A6-15</td><td>屋面隔热<span class="m"> </span>屋面现浇陶粒混凝土<span class="m"> </span>每增减<span class="m">10mm</span></td><td class="m">100m2</td><td class="n">548.05</td><td class="n">488.59</td></tr>
            <tr class="h19"><th class="m">16</th><td class="m">A6-16</td><td>屋面防水隔热<span class="m"> SY-</span>防水隔热泡沫混凝土<span class="m"> </span>厚<span class="m">100mm</span></td><td class="m">100m2</td><td class="n">5571.69</td><td class="n">5069.4</td></tr>
            <tr class="h19"><th class="m">17</th><td class="m">A6-17</td><td>屋面现浇特种混凝土隔热层<span class="m"> </span>泡沫混凝土<span class="m"> </span>厚<span class="m">100mm</span></td><td class="m">100m2</td><td class="n">2493.77</td><td class="n">2249.98</td></tr>
            <tr class="h29"><th class="m">18</th><td class="m">A6-18</td><td>屋面现浇特种混凝土隔热层<span class="m"> </span>泡沫混凝土<span class="m"> </span>每增减<span class="m">1</span><br><span class="m">0mm</span></td><td class="m">100m2</td><td class="n">236.22</td><td class="n">212.24</td></tr>
            <tr class="h19"><th class="m">19</th><td class="m">A6-19</td><td>屋面现浇特种混凝土隔热层<span class="m"> </span>加气混凝土<span class="m"> </span>厚<span class="m">100mm</span></td><td class="m">100m2</td><td class="n">2924.54</td><td class="n">2628.16</td></tr>
            <tr class="h29"><th class="m">20</th><td class="m">A6-20</td><td>屋面现浇特种混凝土隔热层<span class="m"> </span>加气混凝土<span class="m"> </span>每增减<span class="m">1</span><br><span class="m">0mm</span></td><td class="m">100m2</td><td class="n">279.14</td><td class="n">249.92</td></tr>
            <tr class="h19"><th class="m">21</th><td class="m">A6-21</td><td>屋面<span class="m"> </span>阻隔膜</td><td class="m">100m2</td><td class="n">6137.36</td><td class="n">5457.51</td></tr>
            <tr class="h19"><th class="m">22</th><td class="m">A6-22</td><td>屋面隔热涂料<span class="m"> 1.5mm</span></td><td class="m">100m2</td><td class="n">2852.84</td><td class="n">2595.95</td></tr>
            <tr class="h19"><th class="m">23</th><td class="m">A6-23</td><td>彩色隔热防浸环保涂料<span class="m"> 0.5mm </span>滚涂</td><td class="m">100m2</td><td class="n">5837.34</td><td class="n">5216.13</td></tr>
            <tr class="h19"><th class="m">24</th><td class="m">A6-24</td><td>彩色隔热防浸环保涂料<span class="m"> 0.5mm </span>喷涂</td><td class="m">100m2</td><td class="n">5502.82</td><td class="n">4873.11</td></tr>
            <tr class="h19"><th class="m">25</th><td class="m">A6-25</td><td>屋面保温层<span class="m"> </span>排气管安装<span class="m"> PVC</span>管</td><td class="m">10m</td><td class="n">127.48</td><td class="n">117.72</td></tr>
          </tbody>
        </table>
        <div class="blank"></div>
        <div class="vs"><svg class="ic"><use href="#chev"/></svg><div class="track low"><i class="h17"></i></div><svg class="ic down"><use href="#chev"/></svg></div>
      </div>
    </div>
  </div>
</section>

<svg class="ring thin" viewBox="0 0 230 60" aria-hidden="true"><ellipse cx="115" cy="30" rx="113" ry="27"/></svg>
<svg class="ring thick" viewBox="0 0 412 74" aria-hidden="true"><ellipse cx="206" cy="37" rx="201" ry="32"/></svg>
</body>
</html>
```
FILE: styles.css
```css
* { box-sizing: border-box; }
html, body { margin: 0; }
body {
  position: relative;
  min-height: 100vh;
  display: flex;
  flex-direction: column;
  overflow: hidden;
  background: #f0f0f0;
  color: #000;
  font: 12px/12px "Noto Sans CJK SC", sans-serif;
}
button, input, select { font: inherit; color: inherit; }
button { border: 0; padding: 0; background: none; white-space: nowrap; }
h1, h2 { margin: 0; font-size: 12px; font-weight: 400; }
ul { list-style: none; margin: 0; padding: 0; }
i { font-style: normal; }
mark { background: #d9d9d9; color: inherit; }
.defs { position: absolute; width: 0; height: 0; }
.ic { width: 16px; height: 16px; flex: none; display: block; }
.s10 { width: 10px; height: 10px; }
.s12 { width: 12px; height: 12px; }
.s18 { width: 18px; height: 18px; }
.s22 { width: 22px; height: 22px; }
.s24 { width: 24px; height: 24px; }
.w12 { width: 12px; }
.w24 { width: 24px; }
.left { transform: rotate(-90deg); }
.right.ic { transform: rotate(90deg); }
.down { transform: rotate(180deg); }
.gray { color: #bbb; }
.blue.ic { color: #3e7be6; }
.m, .n, .code { font-family: "DejaVu Sans Mono", monospace; font-size: 10px; white-space: pre; }
span.m { line-height: 0; }

/* title and menu */
.titlebar { height: 23px; flex: none; background: #fff; display: flex; align-items: center; gap: 5px; padding-left: 2px; color: #999; }
.titlebar h1 { flex: 1; font: 12px/20px "Noto Sans", "Noto Sans CJK SC", sans-serif; white-space: nowrap; overflow: hidden; }
.winbtns { display: flex; }
.winbtns button { width: 46px; display: flex; justify-content: center; }
.titlebar .winbtns { flex: none; }
.ball { position: absolute; left: 985px; top: -25px; width: 44px; height: 44px; border-radius: 50%; background: #43c152; border: 2px solid #3aa04a; outline: 1px solid #dff3df; box-shadow: 0 3px 8px #0007; color: #fff; font: 700 12px/14px "Open Sans", sans-serif; text-align: center; padding-top: 23px; }
.menubar { height: 28px; flex: none; display: flex; align-items: center; gap: 11px; padding-left: 2px; font-family: "Open Sans", "Noto Sans CJK SC", sans-serif; }
.menubar > .ic + button { margin-left: -4px; }
.menubar button { display: flex; align-items: center; gap: 3px; }
.menubar .mdi { margin-left: auto; display: flex; gap: 7px; padding-right: 4px; }

/* tool bars */
.bars { display: flex; gap: 2px; height: 26px; flex: none; padding: 0 0 1px 2px; }
.band { display: flex; align-items: center; padding: 0 5px 0 2px; border-radius: 3px; background: linear-gradient(#fcfcfc, #ececec); white-space: nowrap; }
.g7 { gap: 7px; }
.grip { width: 3px; height: 15px; margin-right: -3px; background: repeating-linear-gradient(#b0b0b0 0 2px, transparent 2px 4px); }
.sep { width: 1px; height: 15px; background: #b5b5b5; }
.caret { width: 7px; height: 4px; background: #111; clip-path: polygon(0 0, 100% 0, 50% 100%); }
.dim { background: #888; }
.tb { display: flex; align-items: center; gap: 4px; }
.tb.on { height: 23px; margin: 0 -3px; padding: 0 2px; border: 1px solid #0078d7; background: #dcebf8; }
.off { color: #888; }
.dd { display: flex; align-items: center; gap: 8px; }
.dd.tight { gap: 3px; }
.chk { display: flex; align-items: center; gap: 8px; margin-left: -3px; }
.chk input { appearance: none; width: 11px; height: 11px; margin: 0; border: 1px solid #aaa; background: #fff; }
.fx, .para { width: 16px; font: italic 700 15px/16px "Liberation Serif", serif; }
.para { font-style: normal; font-size: 16px; }
.imegap { width: 176px; }

/* workspace */
.work { flex: 1; min-height: 0; display: flex; }
.vtabs { position: relative; width: 25px; flex: none; display: flex; flex-direction: column; align-items: flex-start; padding: 10px 0 0 2px; height: 629px; overflow: hidden; border-right: 2px solid #777; background: #e9e9e9; }
.vt { position: relative; width: 22px; flex: none; margin-bottom: -4px; padding: 11px 4px 19px 6px; background: #777; clip-path: polygon(0 6px, 10px 0, 21px 4px, 21px 100%, 0 calc(100% - 10px)); }
.vt::before { content: ""; position: absolute; inset: 1px; background: #fff; clip-path: polygon(0 6px, 10px 0, 19px 4px, 19px 100%, 0 calc(100% - 10px)); }
.vt span { position: relative; display: block; width: 12px; white-space: normal; line-height: 13px; }
.vt.first, .vt.cur { clip-path: polygon(0 11px, 100% 0, 100% 100%, 0 calc(100% - 10px)); }
.vt.first { padding-top: 16px; padding-bottom: 13px; }
.vt.cur { font-weight: 700; padding-top: 14px; padding-bottom: 20px; }
.vt.cur::before { background: #f0f0f0; clip-path: polygon(0 11px, 100% 0, 100% 100%, 0 calc(100% - 10px)); }
.vnav { position: absolute; left: 0; bottom: 2px; display: flex; background: #ddd; }
.vnav button { width: 11px; height: 12px; border: 1px solid #555; }

.side { width: 155px; flex: none; display: flex; flex-direction: column; padding-left: 4px; }
.sidehead { height: 27px; display: flex; align-items: center; padding: 0 7px 0 39px; justify-content: space-between; }
.sidebox { flex: 1; display: flex; flex-direction: column; border: 1px solid #828790; background: #fff; padding: 1px; }
.ptree { flex: 1; padding: 1px 0 0 5px; line-height: 14px; white-space: nowrap; overflow: hidden; }
.ptree ul { margin-left: 8px; border-left: 1px dotted #999; height: 106px; }
.ptree li { display: flex; align-items: center; gap: 1px; height: 14px; }
.ptree li::before { content: ""; width: 9px; flex: none; border-top: 1px dotted #999; }
.foottabs { height: 22px; display: flex; padding-left: 9px; }
.foottabs button { height: 17px; padding: 0 5px; border: solid #888; border-width: 0 1px 1px; border-radius: 0 0 5px 5px; background: #fff; }
.foottabs button + button { background: #f0f0f0; }
.split { width: 7px; flex: none; display: flex; align-items: center; }
.split i { width: 6px; height: 100px; border: 1px solid #888; background: #f8f8f8; }

.hs { display: flex; align-items: center; height: 16px; flex: none; background: #f0f0f0; color: #555; }
.vs { width: 18px; flex: none; display: flex; flex-direction: column; align-items: center; background: #f0f0f0; border-right: 2px solid #fff; color: #555; }
.hs .track, .vs .track { flex: 1; }
.track i { display: block; background: #cdcdcd; width: 16px; height: 15px; }
.track .w84 { width: 84px; }
.track .w105 { width: 105px; }
.track .w17 { width: 17px; }
.track .h17 { height: 17px; }
.track .h286 { height: 286px; }
.track.low { padding-top: 226px; }

.right:not(.ic) { flex: 1; min-width: 0; display: flex; flex-direction: column; }
section.right > .bars { padding-left: 4px; height: 27px; }
.gridbox { display: flex; flex-direction: column; border: 1px solid #a0a0a8; background: #fff; overflow: hidden; }
.view { display: flex; flex: 1; min-height: 0; overflow: hidden; align-items: flex-start; }
.view > .vs { align-self: stretch; }
.upper { height: 355px; flex: none; }
.upper .hs { height: 17px; }
.upper .vs { width: 19px; }
.upper .grid { flex: 1; min-width: 0; }
.blank { flex: 1; }
.grid { table-layout: fixed; border-collapse: separate; border-spacing: 0; background: #fff; }
.grid th, .grid td { padding: 0 2px; border: solid #bcbcbc; border-width: 0 1px 1px 0; font-weight: 400; white-space: nowrap; overflow: hidden; text-align: left; }
.grid th { padding: 0; background: #f0f0f0; text-align: center; }
.grid .hot { background: linear-gradient(#fbd9a0, #f3c060); }
.grid .rowhot { background: #ffd28a; }
.grid .n, .grid .r { text-align: right; padding-right: 3px; }
.grid .mid { text-align: center; }
.grid .light td { background: #e2f3ff; }
.grid .light .sel { background: #bddffa; }
.grid .blue td { background: #aadcfb; }
.pm { display: inline-block; width: 13px; height: 13px; border: 1px solid #999; background: linear-gradient(#333, #333) center / 7px 1px no-repeat #fff; vertical-align: middle; margin: 0 2px 0 1px; }
.grid .nest { padding-left: 11px; background: linear-gradient(#bbb, #bbb) 8px 0 / 1px 100% no-repeat; }
.grid .feat { vertical-align: top; padding: 3px 2px; }
.c21 { width: 21px; } .c22 { width: 22px; } .c34 { width: 34px; } .c39 { width: 39px; } .c41 { width: 41px; } .c42 { width: 42px; } .c48 { width: 48px; }
.c55 { width: 55px; } .c57 { width: 57px; } .c62 { width: 62px; } .c65 { width: 65px; } .c75 { width: 75px; } .c79 { width: 79px; } .c81 { width: 81px; }
.c119 { width: 119px; } .c125 { width: 125px; }
tr.h19 { height: 19px; } tr.h20 { height: 20px; } tr.h21 { height: 21px; } tr.h22 { height: 22px; } tr.h29 { height: 29px; } tr.h112 { height: 112px; }

.subtab { height: 30px; flex: none; padding: 9px 0 0 2px; }
.subtab button { height: 18px; padding: 0 6px; border: solid #888; border-width: 1px 0 0 1px; background: #f8f8f8; }
.lower { flex: 1; min-height: 0; display: flex; }
.lower .gridbox { flex: 1; min-width: 0; margin-bottom: 1px; }
.lower .view { max-height: 215px; padding-top: 1px; }
.yel { width: 930px; }
.yel td { background: #ffffc0; }
.yel td.green { background: #d8ebc4; }
.grid .code { padding-left: 20px; }
.ops { width: 127px; flex: none; padding: 5px 4px 0 1px; display: flex; flex-direction: column; }
.opgrid { display: grid; grid-template-columns: 1fr 1fr; gap: 6px; padding: 0 9px 0 9px; }
.gb { height: 23px; border: 1px solid #bdbdbd; background: #ccc; color: #838383; font-family: "Open Sans", "Noto Sans CJK SC", sans-serif; }
.wide { grid-column: span 2; }
fieldset { margin: 2px 0 0; padding: 11px 0 10px 0; border: 1px solid #dcdcdc; display: grid; grid-template-columns: 68px 1fr; gap: 10px 0; }
legend { margin-left: 8px; padding: 0 2px; line-height: 14px; }
fieldset label, .scope label { display: flex; align-items: center; gap: 3px; white-space: nowrap; }
input[type="radio"] { appearance: none; width: 13px; height: 13px; margin: 0; border: 1px solid #333; border-radius: 50%; background: #fff; }
input[type="radio"]:checked { background: radial-gradient(circle, #111 3px, #fff 4px); }

.status { height: 21px; flex: none; display: grid; grid-template-columns: 382fr 382fr 229fr 177fr 188fr; gap: 2px; border-top: 1px solid #fff; }
.status > span { border: 1px solid #d2d2d2; line-height: 18px; padding-left: 1px; white-space: nowrap; overflow: hidden; }

/* task bar */
.taskbar { height: 40px; flex: none; display: flex; background: #020d12; color: #fff; font: 12px/17px "Open Sans", "Noto Sans CJK SC", sans-serif; }
.start { width: 48px; display: grid; place-items: center; background: #000; }
.search { width: 344px; background: #333; display: flex; align-items: center; gap: 4px; padding: 0 12px 0 9px; }
.search input { flex: 1; min-width: 0; border: 0; padding: 0; background: none; font-size: 14px; outline: 0; }
.search input::placeholder { color: #8f8f8f; }
.apps { display: flex; }
.apps button { width: 49px; display: grid; place-items: center; }
.apps .run { background: linear-gradient(#76b9ed, #76b9ed) center bottom / 40px 2px no-repeat; }
.apps .act { background: linear-gradient(#76b9ed, #76b9ed) center bottom / 49px 2px no-repeat #354045; }
.cpu { margin-left: auto; padding-top: 3px; text-align: center; width: 74px; }
.tray { display: flex; align-items: center; gap: 8px; padding-left: 3px; }
.tray .zh { font-size: 14px; }
.clock { width: 92px; text-align: center; padding-top: 2px; line-height: 18px; }
.note { width: 40px; display: grid; place-items: center; border-right: 1px solid #555; margin-right: 5px; }

/* floating input-method bar */
.ime { position: absolute; left: 724px; top: 82px; height: 24px; width: 186px; display: flex; align-items: center; justify-content: space-between; padding-right: 4px; background: #fff; border: 1px solid #b9d0e6; color: #1c6fc4; font-size: 15px; }
.ime .logo { width: 28px; height: 28px; flex: none; margin-top: -4px; }

/* query window */
.dialog { position: absolute; left: 242px; top: 194px; width: 853px; height: 514px; display: flex; flex-direction: column; border: 1px solid #3b8fe6; background: #f0f0f0; box-shadow: 0 2px 14px #0006; overflow: hidden; }
.dialog header { height: 30px; flex: none; background: #fff; display: flex; align-items: center; gap: 5px; padding-left: 8px; }
.dialog header .winbtns { margin-left: auto; }
.lt { color: #bbb; }
.dtools { height: 27px; flex: none; display: flex; align-items: flex-start; }
.dtools > button { height: 22px; padding: 0 10px; border-right: 1px solid #999; line-height: 20px; }
.dtools > button:first-child { padding: 0 12px 0 7px; }
.dtools > button:nth-child(2) { padding: 0 17px 0 9px; }
.dtools > button.press { margin: 1px 6px 0 4px; padding: 0 10px 0 6px; height: 20px; border: solid #777; border-width: 1px 0 0 1px; background: #f9f9f9; }
.dtools > .press + button { border-left: 1px solid #999; }
.dacts { margin: 3px -3px 0 auto; display: flex; gap: 4px; }
.dacts .gb { width: 73px; height: 24px; }
.dbody { flex: 1; min-height: 0; display: flex; gap: 4px; padding: 0 1px 1px 0; }
.dleft { width: 216px; flex: none; display: flex; flex-direction: column; }
.combo { position: relative; height: 21px; flex: none; border: 1px solid #adadad; background: #e1e1e1; overflow: hidden; }
.combo select { appearance: none; width: 100%; height: 19px; border: 0; padding: 0 0 0 2px; background: none; }
.combo .ic { position: absolute; right: 0; top: 2px; color: #555; background: #e1e1e1; }
.dtabs { height: 22px; flex: none; display: flex; align-items: flex-end; padding-top: 1px; }
.dtabs button { height: 19px; padding: 0 3px; border: 1px solid #d9d9d9; }
.dtabs .cur { height: 21px; padding: 0 7px; background: #fff; border-bottom: 0; }
.dpage { flex: 1; min-height: 0; margin-right: 2px; padding: 2px 1px 0 4px; display: flex; flex-direction: column; border: 1px solid #dcdcdc; border-left: 0; background: #f0f0f0; }
.treebox { height: 368px; width: 208px; flex: none; display: flex; flex-direction: column; border: 1px solid #828790; background: #fff; padding: 1px; }
.tree { flex: 1; min-width: 0; overflow: hidden; color: #000; }
.tree li { height: 16px; display: flex; align-items: center; gap: 3px; white-space: nowrap; }
.tree .ic { color: #444; }
.tree .right { color: #999; }
.tree .l0 { padding-left: 4px; }
.tree .l1 { padding-left: 23px; background: repeating-linear-gradient(#999 0 1px, transparent 1px 2px) 12px 0 / 1px 100% no-repeat; }
.tree .l2 { padding-left: 42px; background: repeating-linear-gradient(#999 0 1px, transparent 1px 2px) 31px 0 / 1px 100% no-repeat; }
.tree .l3 { padding-left: 70px; gap: 0; background: repeating-linear-gradient(#999 0 1px, transparent 1px 2px) 69px 0 / 1px 100% no-repeat; }
.tree .l3::before { content: ""; width: 9px; flex: none; border-top: 1px dotted #999; }
.tree mark { line-height: 15px; padding-right: 3px; }
.scope { flex: 1; display: flex; align-items: center; gap: 21px; padding-left: 11px; }
.scope label { gap: 8px; }
.scope input[type="radio"] { width: 11px; height: 11px; border-color: #999; }
.dbody > .gridbox { flex: 1; min-width: 0; padding-top: 1px; }
.quota { width: 554px; }

/* red annotation rings */
.ring { position: absolute; fill: none; stroke: #f00; pointer-events: none; }
.thin { left: 253px; top: 390px; width: 230px; height: 60px; stroke-width: 3px; }
.thick { left: 461px; top: 509px; width: 412px; height: 74px; stroke-width: 8px; }
```
